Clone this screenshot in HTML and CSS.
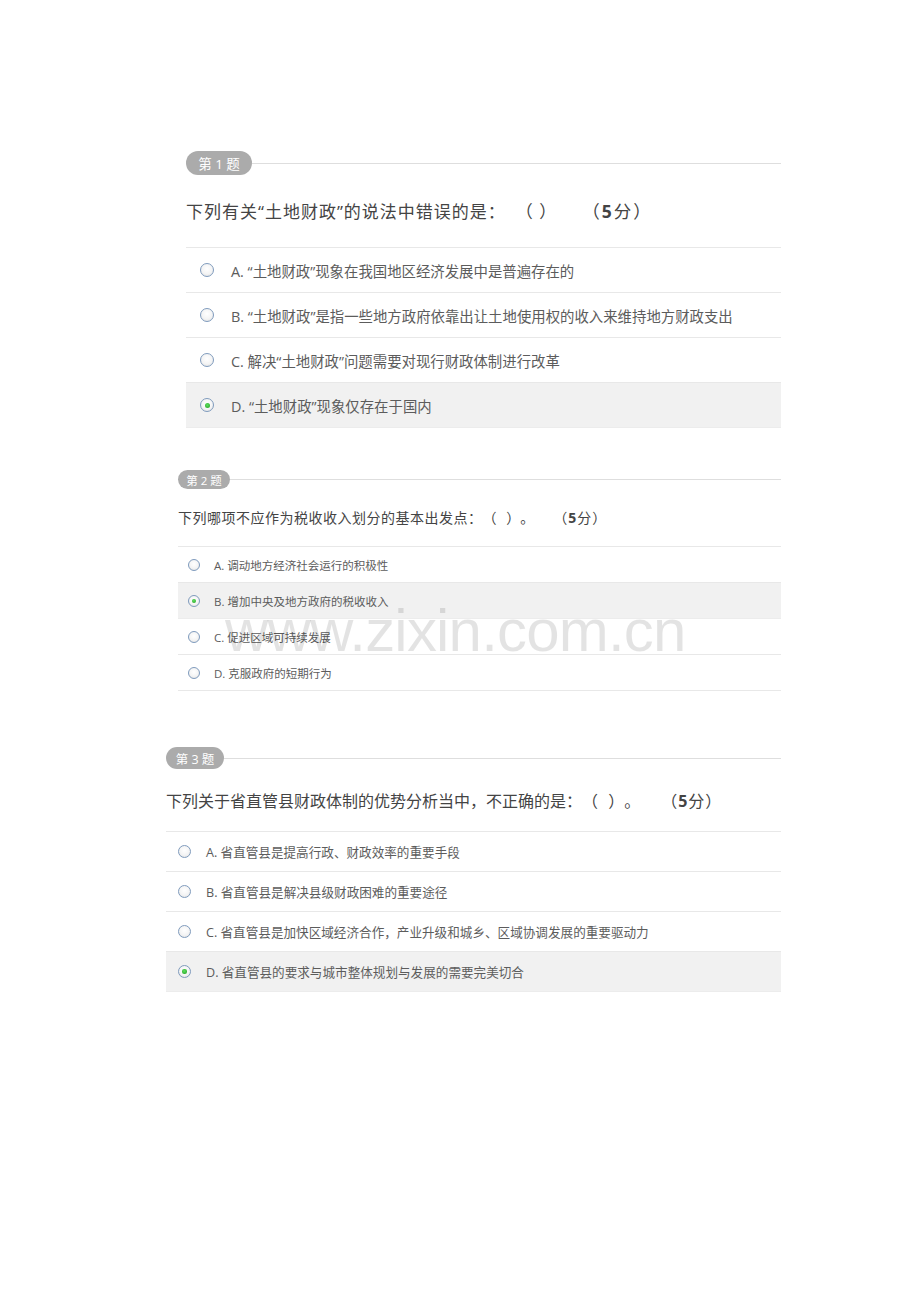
FILE: index.html
```html
<!DOCTYPE html>
<html lang="zh-CN">
<head>
<meta charset="utf-8">
<title>题目</title>
<link rel="stylesheet" href="styles.css">
</head>
<body>
<div class="page">
  <section class="q q1">
    <div class="qhead"><span class="badge">第 1 题</span><span class="rule"></span></div>
    <div class="qtext"><span class="stem">下列有关“土地财政”的说法中错误的是：</span><span class="paren">（ ）</span><span class="score">（<b>5</b>分）</span></div>
    <ul class="opts">
      <li class="opt"><span class="radio"></span><span class="label">A. “土地财政”现象在我国地区经济发展中是普遍存在的</span></li>
      <li class="opt"><span class="radio"></span><span class="label">B. “土地财政”是指一些地方政府依靠出让土地使用权的收入来维持地方财政支出</span></li>
      <li class="opt"><span class="radio"></span><span class="label">C. 解决“土地财政”问题需要对现行财政体制进行改革</span></li>
      <li class="opt sel"><span class="radio on"></span><span class="label">D. “土地财政”现象仅存在于国内</span></li>
    </ul>
  </section>

  <section class="q q2">
    <div class="qhead"><span class="badge">第 2 题</span><span class="rule"></span></div>
    <div class="qtext"><span class="stem">下列哪项不应作为税收收入划分的基本出发点：</span><span class="paren">（ ）。</span><span class="score">（<b>5</b>分）</span></div>
    <ul class="opts">
      <li class="opt"><span class="radio"></span><span class="label">A. 调动地方经济社会运行的积极性</span></li>
      <li class="opt sel"><span class="radio on"></span><span class="label">B. 增加中央及地方政府的税收收入</span></li>
      <li class="opt"><span class="radio"></span><span class="label">C. 促进区域可持续发展</span></li>
      <li class="opt"><span class="radio"></span><span class="label">D. 克服政府的短期行为</span></li>
    </ul>
  </section>

  <section class="q q3">
    <div class="qhead"><span class="badge">第 3 题</span><span class="rule"></span></div>
    <div class="qtext"><span class="stem">下列关于省直管县财政体制的优势分析当中，不正确的是：</span><span class="paren">（ ）。</span><span class="score">（<b>5</b>分）</span></div>
    <ul class="opts">
      <li class="opt"><span class="radio"></span><span class="label">A. 省直管县是提高行政、财政效率的重要手段</span></li>
      <li class="opt"><span class="radio"></span><span class="label">B. 省直管县是解决县级财政困难的重要途径</span></li>
      <li class="opt"><span class="radio"></span><span class="label">C. 省直管县是加快区域经济合作，产业升级和城乡、区域协调发展的重要驱动力</span></li>
      <li class="opt sel"><span class="radio on"></span><span class="label">D. 省直管县的要求与城市整体规划与发展的需要完美切合</span></li>
    </ul>
  </section>

  <div class="watermark">www.zixin.com.cn</div>
</div>
</body>
</html>
```

FILE: styles.css
```css
* { box-sizing: border-box; }
html, body { margin: 0; padding: 0; background: #fff; }
body {
  font-family: "Open Sans", "Noto Sans CJK SC", sans-serif;
  color: #444;
  text-spacing-trim: space-all;
}
.page {
  position: relative;
  width: 920px;
  height: 1302px;
  padding-top: 151px;
}
.q { display: flex; flex-direction: column; }
.qhead { display: flex; align-items: center; }
.badge {
  background: #ababab;
  color: #fff;
  border-radius: 999px;
  white-space: nowrap;
  display: flex;
  align-items: center;
  justify-content: center;
}
.rule { flex: 1; height: 1px; background: #dedede; }
.qtext { color: #444; white-space: nowrap; text-spacing-trim: space-all; }
.qtext span { line-height: 1; }
.paren { word-spacing: 6px; }
.score b { font-weight: 700; }
.opts {
  list-style: none;
  margin: 0;
  padding: 0;
  border-top: 1px solid #e8e8e8;
}
.opt {
  display: flex;
  align-items: center;
  border-bottom: 1px solid #e8e8e8;
  color: #5c5c5c;
  white-space: nowrap;
}
.opt.sel { background: #f1f1f1; border-bottom-color: #ececec; }
.radio {
  flex: none;
  border-radius: 50%;
  border: 1.5px solid #7f9bbd;
  background: radial-gradient(circle at 50% 40%, #ffffff 0%, #f4f4f4 55%, #dcdcdc 100%);
  display: flex;
  align-items: center;
  justify-content: center;
}
.radio.on::after {
  content: "";
  border-radius: 50%;
  background: radial-gradient(circle at 45% 40%, #5fe05f, #1f9d1f);
}

/* Question 1 */
.q1 { margin-left: 186px; width: 595px; }
.q1 .badge { width: 66px; height: 24px; font-size: 13.5px; }
.q1 .qtext { font-size: 17px; line-height: 24px; height: 72px; padding: 25px 0 23px; }
.q1 .stem { letter-spacing: 1px; }
.q1 .paren { margin-left: 10px; word-spacing: 2px; }
.q1 .score { margin-left: 26px; letter-spacing: 2px; font-size: 17.5px; }
.q1 .opt { height: 45px; padding-left: 14px; }
.q1 .radio { width: 14px; height: 14px; margin-right: 17px; }
.q1 .radio.on::after { width: 5px; height: 5px; }
.q1 .label { font-size: 14.4px; }

/* Question 2 */
.q2 { margin-left: 178px; width: 603px; margin-top: 42px; }
.q2 .badge { width: 52px; height: 19px; font-size: 11.5px; }
.q2 .qtext { font-size: 14px; line-height: 20px; height: 57px; padding: 19px 0 18px; }
.q2 .stem { letter-spacing: 0.5px; }
.q2 .paren { margin-left: 0; }
.q2 .score { margin-left: 19px; letter-spacing: 1px; }
.q2 .opt { height: 36px; padding-left: 10px; }
.q2 .radio { width: 12px; height: 12px; margin-right: 14px; }
.q2 .radio.on::after { width: 4px; height: 4px; }
.q2 .label { font-size: 11.5px; }

/* Question 3 */
.q3 { margin-left: 166px; width: 615px; margin-top: 56px; }
.q3 .badge { width: 58px; height: 22px; font-size: 12.5px; }
.q3 .qtext { font-size: 16px; line-height: 22px; height: 62px; padding: 21px 0 19px; }
.q3 .score { margin-left: 21px; letter-spacing: 1px; }
.q3 .opt { height: 40px; padding-left: 12px; }
.q3 .radio { width: 13px; height: 13px; margin-right: 15px; }
.q3 .radio.on::after { width: 4.5px; height: 4.5px; }
.q3 .label { font-size: 12.6px; }

.watermark {
  position: absolute;
  left: 225px;
  top: 601px;
  font-family: "Liberation Sans", sans-serif;
  font-size: 60px;
  line-height: 60px;
  letter-spacing: -0.8px;
  color: rgba(0, 0, 0, 0.11);
  white-space: nowrap;
  pointer-events: none;
}
```
